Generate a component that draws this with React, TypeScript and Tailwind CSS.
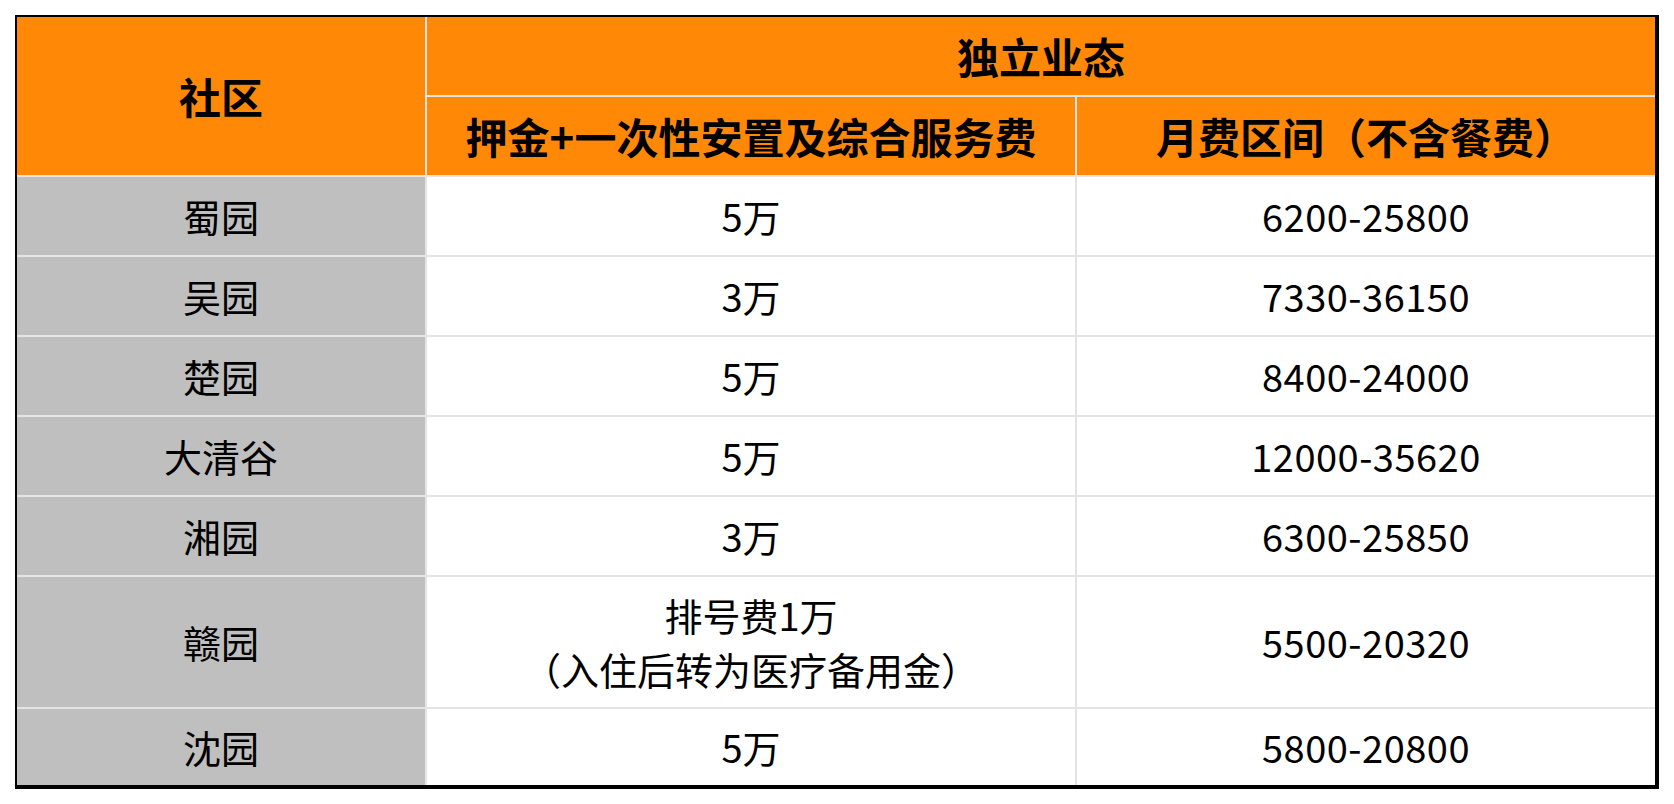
const rows: { name: string; deposit: string[]; fee: string }[] = [
  { name: "蜀园", deposit: ["5万"], fee: "6200-25800" },
  { name: "吴园", deposit: ["3万"], fee: "7330-36150" },
  { name: "楚园", deposit: ["5万"], fee: "8400-24000" },
  { name: "大清谷", deposit: ["5万"], fee: "12000-35620" },
  { name: "湘园", deposit: ["3万"], fee: "6300-25850" },
  { name: "赣园", deposit: ["排号费1万", "（入住后转为医疗备用金）"], fee: "5500-20320" },
  { name: "沈园", deposit: ["5万"], fee: "5800-20800" },
]

const font = { fontFamily: '"Noto Sans CJK SC", "Noto Sans", sans-serif' }

export default function App() {
  return (
    <div className="bg-white p-[15px] w-[1674px] h-[804px]" style={font}>
      <div className="border-t-2 border-l-2 border-r-4 border-b-4 border-black bg-[#e4e4e4]">
        <div className="grid grid-cols-[408px_648px_578px] grid-rows-[78px_78px_78px_78px_78px_78px_78px_130px_76px] gap-[2px] text-black">
          {/* Header */}
          <div className="row-span-2 bg-[#ff8806] flex items-center justify-center text-[42px] font-bold leading-none">
            社区
          </div>
          <div className="col-span-2 bg-[#ff8806] flex items-center justify-center text-[42px] font-bold leading-none">
            独立业态
          </div>
          <div className="bg-[#ff8806] flex items-center justify-center text-[42px] font-bold leading-none">
            押金+一次性安置及综合服务费
          </div>
          <div className="bg-[#ff8806] flex items-center justify-center text-[42px] font-bold leading-none">
            月费区间（不含餐费）
          </div>

          {/* Body */}
          {rows.map((r) => (
            <div key={r.name} className="contents">
              <div className="bg-[#bfbfbf] flex items-center justify-center text-[38px] leading-none">
                {r.name}
              </div>
              <div className="bg-white flex flex-col items-center justify-center text-[38px] leading-[54px]">
                {r.deposit.map((d) => (
                  <span key={d}>{d}</span>
                ))}
              </div>
              <div className="bg-white flex items-center justify-center text-[38px] leading-none tracking-[0.5px]">
                {r.fee}
              </div>
            </div>
          ))}
        </div>
      </div>
    </div>
  )
}
